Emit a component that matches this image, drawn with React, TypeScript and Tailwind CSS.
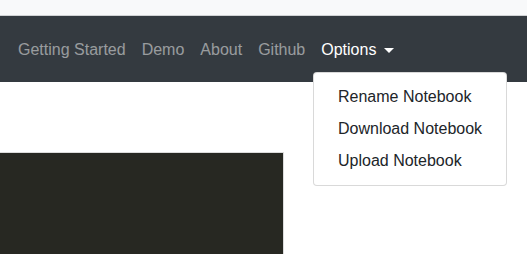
export default function App() {
  const links = ["Getting Started", "Demo", "About", "Github"];
  const items = ["Rename Notebook", "Download Notebook", "Upload Notebook"];

  return (
    <div className="relative h-[254px] w-[527px] overflow-hidden bg-white font-['Liberation_Sans',Arial,sans-serif] text-base">
      {/* strip above the navbar */}
      <div className="h-[16px] border-b border-[#d0d2d4] bg-[#f8f9fa]" />

      <nav className="flex h-[66px] items-center bg-[#343a40] pl-[10px] pt-[2px]">
        {links.map((l) => (
          <a key={l} className="whitespace-nowrap px-2 leading-6 text-[rgba(255,255,255,0.5)]">
            {l}
          </a>
        ))}
        <a className="flex items-center whitespace-nowrap px-2 leading-6 text-white">
          Options
          <span className="ml-2 h-0 w-0 border-x-[5px] border-t-[5px] border-x-transparent border-t-white" />
        </a>
      </nav>

      {/* editor panel */}
      <div className="mt-[70px] h-[120px] w-[284px] border-t border-r border-[#dcdcdc] bg-[#272822]" />

      {/* open dropdown menu */}
      <div className="absolute left-[313px] top-[72px] w-[194px] rounded border border-[rgba(0,0,0,0.15)] bg-white py-2">
        {items.map((i) => (
          <div key={i} className="whitespace-nowrap px-6 py-1 leading-6 text-[#212529]">
            {i}
          </div>
        ))}
      </div>
    </div>
  );
}
